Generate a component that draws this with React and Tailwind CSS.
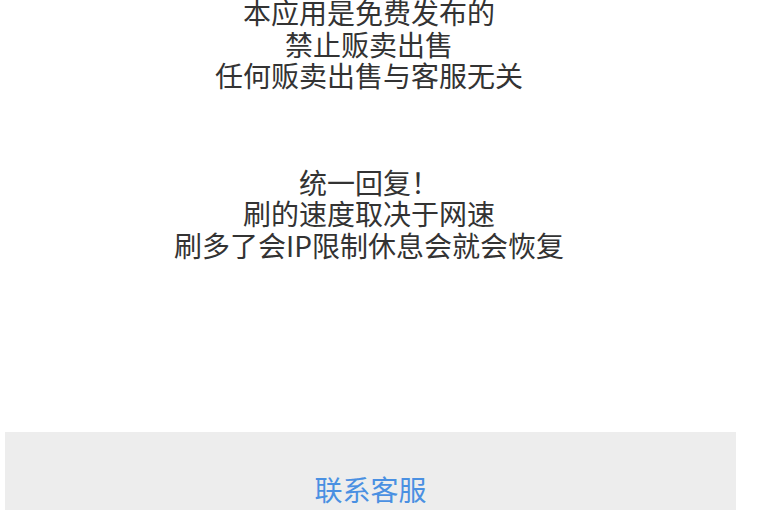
import React from "react";

const lines1 = ["本应用是免费发布的", "禁止贩卖出售", "任何贩卖出售与客服无关"];
const lines2 = ["统一回复！", "刷的速度取决于网速", "刷多了会IP限制休息会就会恢复"];

export default function App() {
  return (
    <div
      className="h-[510px] w-[768px] overflow-hidden bg-white"
      style={{ fontFamily: '"Noto Sans CJK SC", "Noto Sans", sans-serif' }}
    >
      <div className="w-[738px] text-center text-[28px] leading-[31.5px] text-[#333]">
        {/* notice */}
        <div className="-mt-[3px]">
          {lines1.map((l, i) => (
            <p key={i}>{l}</p>
          ))}
        </div>
        <div className="mt-[75px]">
          {lines2.map((l, i) => (
            <p key={i}>{l}</p>
          ))}
        </div>
      </div>

      {/* contact button */}
      <div className="ml-[5px] mt-[171px] h-[120px] w-[731px] bg-[#ededed] pt-[42px] text-center">
        <button className="text-[28px] leading-[31.5px] text-[#4a90e2]">联系客服</button>
      </div>
    </div>
  );
}
